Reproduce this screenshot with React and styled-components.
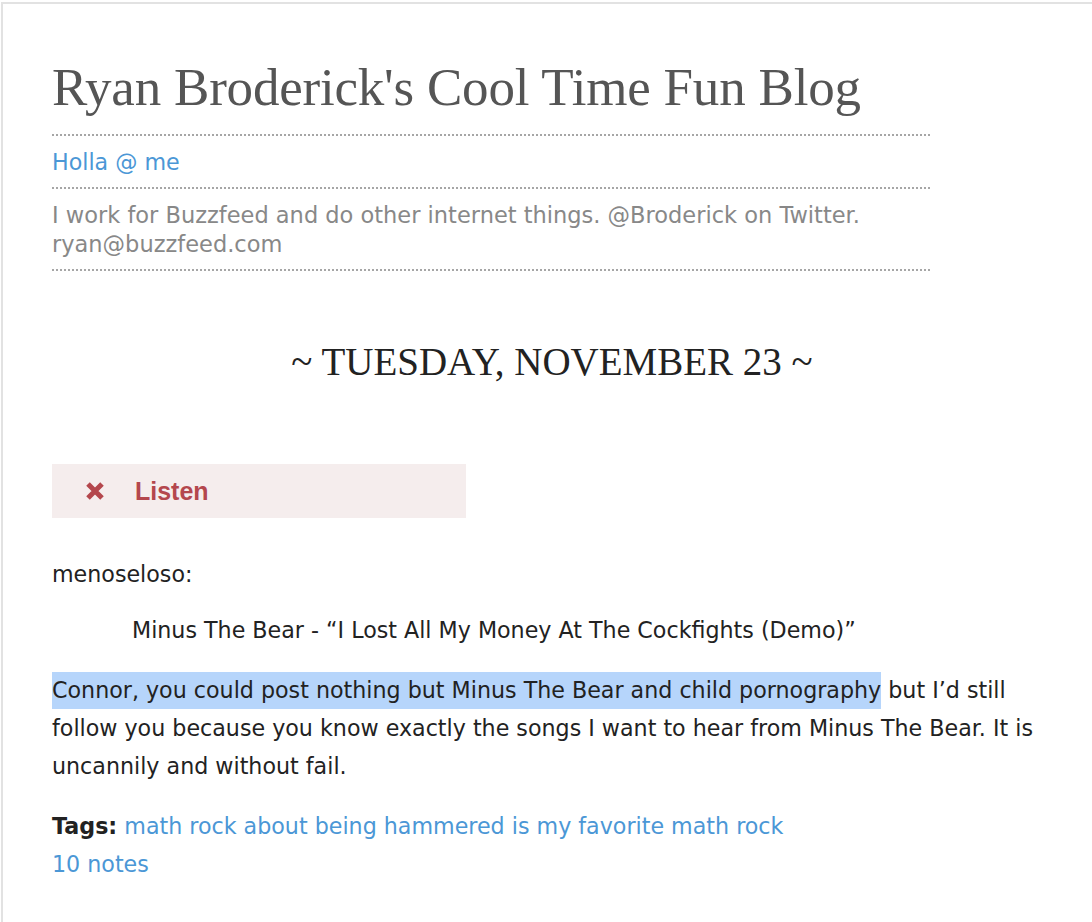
import styled, { createGlobalStyle } from "styled-components";

// Tumblr-style single post page

const Global = createGlobalStyle`
    body {
        margin: 0;
        background: #fff;
        font-family: "DejaVu Sans", Verdana, sans-serif;
    }
`

const Frame = styled.div`
    margin: 2px 0 0 1px;
    border-top: 2px solid #e2e2e2;
    border-left: 2px solid #e2e2e2;
    min-height: 920px;
    padding: 0 0 0 49px;
`

const Header = styled.header`
    width: 880px;
    padding-top: 50px;
`

const Title = styled.h1`
    margin: 0;
    font-family: "Liberation Serif", Georgia, serif;
    font-weight: normal;
    font-size: 53px;
    line-height: 67px;
    color: #555;
    letter-spacing: -0.2px;
    white-space: nowrap;
`

const Dots = styled.div`
    height: 2px;
    background-image: linear-gradient(to right, #a6a6a6 50%, transparent 50%);
    background-size: 4px 2px;
    margin: ${props => props.gap || "12px 0"};
`

const Holla = styled.a`
    display: block;
    font-size: 22.2px;
    line-height: 28px;
    color: #4b97d6;
    text-decoration: none;
`

const Description = styled.p`
    margin: 0;
    font-size: 22.5px;
    line-height: 29px;
    color: #888;
`

const DateHeading = styled.h2`
    margin: 66px 0 0;
    width: 1000px;
    text-align: center;
    font-family: "Liberation Serif", Georgia, serif;
    font-weight: normal;
    font-size: 39px;
    line-height: 50px;
    color: #222;
`

const Post = styled.article`
    width: 1010px;
    margin-top: 77px;
    color: #222;
    font-size: 22.2px;
    line-height: 38px;
`

const ListenBox = styled.div`
    display: flex;
    align-items: center;
    gap: 30px;
    width: 414px;
    height: 54px;
    padding-left: 33px;
    box-sizing: border-box;
    background: #f5eded;
    color: #b4474d;
    font-family: "Liberation Sans", Arial, sans-serif;
    font-weight: bold;
    font-size: 25px;
`

const Para = styled.p`
    margin: ${props => props.gap || "0"};
`

const Quote = styled.blockquote`
    margin: 18px 0 0 80px;
`

const Selected = styled.span`
    display: inline-block;
    background: #b6d5fb;
    line-height: 37px;
`

const Link = styled.a`
    color: #4b97d6;
    text-decoration: none;
`

const Meta = styled.div`
    margin-top: 22px;
`

const XIcon = () => (
    <svg width="20" height="20" viewBox="0 0 20 20">
        <path d="M3 3 L17 17 M17 3 L3 17" stroke="currentColor" strokeWidth="5" />
    </svg>
)

export default function App() {
    return (
        <>
            <Global />
            <Frame>
                <Header>
                    <Title>Ryan Broderick's Cool Time Fun Blog</Title>
                    <Dots gap="13px 0 12px" />
                    <Holla href="#">Holla @ me</Holla>
                    <Dots gap="11px 0 12px" />
                    <Description>
                        I work for Buzzfeed and do other internet things. @Broderick on Twitter. ryan@buzzfeed.com
                    </Description>
                    <Dots gap="10px 0 0" />
                </Header>
                <DateHeading>~ TUESDAY, NOVEMBER 23 ~</DateHeading>
                <Post>
                    <ListenBox>
                        <XIcon />
                        <span>Listen</span>
                    </ListenBox>
                    <Para gap="37px 0 0">menoseloso:</Para>
                    <Quote>Minus The Bear - “I Lost All My Money At The Cockfights (Demo)”</Quote>
                    <Para gap="22px 0 0">
                        <Selected>Connor, you could post nothing but Minus The Bear and child pornography</Selected> but I’d still follow you because you know exactly the songs I want to hear from Minus The Bear. It is uncannily and without fail.
                    </Para>
                    <Meta>
                        <b>Tags:</b> <Link href="#">math rock about being hammered is my favorite math rock</Link>
                        <br />
                        <Link href="#">10 notes</Link>
                    </Meta>
                </Post>
            </Frame>
        </>
    )
}
